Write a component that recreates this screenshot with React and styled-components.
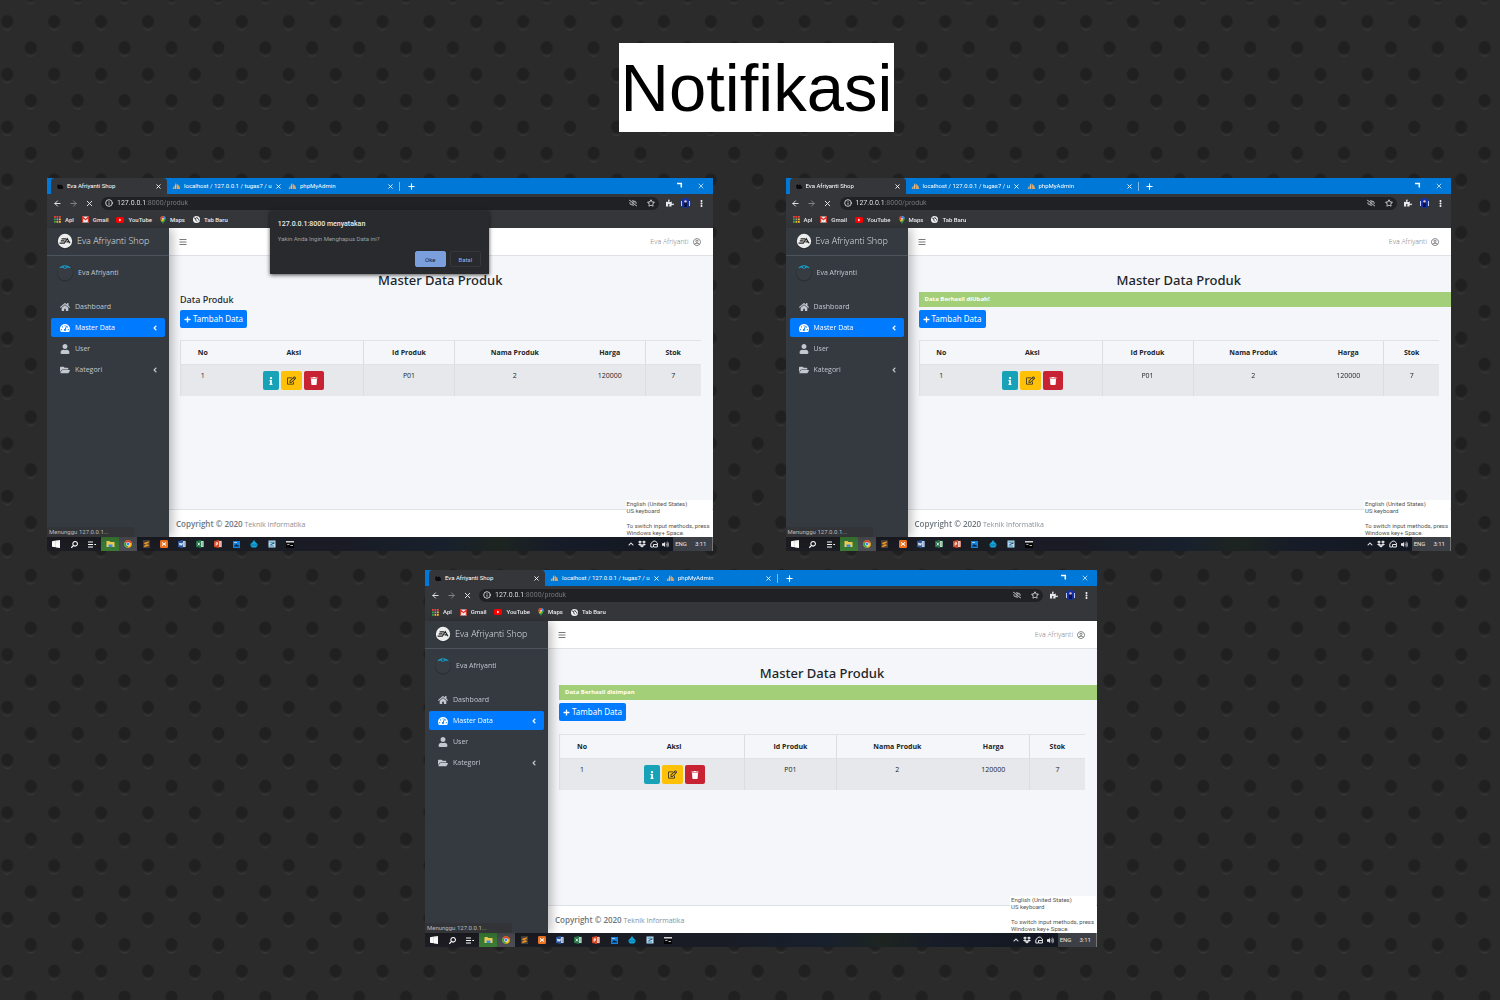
import React from "react";
import styled, { createGlobalStyle } from "styled-components";
import {
  FaHome, FaUser, FaFolderOpen, FaTachometerAlt, FaAngleLeft, FaPlus, FaInfo, FaRegEdit,
  FaTrash, FaBars, FaRegUserCircle, FaPuzzlePiece, FaRegStar, FaRegEyeSlash, FaEllipsisV,
  FaSearch, FaChevronUp, FaDropbox, FaVolumeUp,
} from "react-icons/fa";
import { ArrowLeft, ArrowRight, X, Plus, Info } from "lucide-react";

const ui = `"Open Sans", "Noto Sans", sans-serif`;
const chrome = `Roboto, "Open Sans", sans-serif`;

const GlobalStyle = createGlobalStyle`
  *, *::before, *::after { box-sizing: border-box; }
  body { margin: 0; background: #2a2a2a; font-family: ${ui}; }
  button, input { font: inherit; color: inherit; margin: 0; padding: 0; border: 0; background: none; }
  a { color: inherit; text-decoration: none; }
  svg { display: block; flex: none; }
`;

/* ---------- slide ---------- */

const Backdrop = styled.svg`
  position: fixed;
  inset: 0;
  z-index: -1;
  width: 100%;
  height: 100%;
`;

const Slide = styled.main`
  display: flex;
  flex-direction: column;
  min-height: 100vh;
  padding: 43px 49px 53px 47px;
`;

const TitleRow = styled.header`
  display: flex;
  justify-content: center;
  padding-left: 15px;
  margin-bottom: 46px;
`;

const SlideTitle = styled.h1`
  margin: 0;
  padding: 0 2px;
  background: #fff;
  color: #000;
  font: 400 67px/89px "Liberation Sans", Arial, sans-serif;
`;

const TopShots = styled.div`
  display: grid;
  grid-template-columns: 1fr 1fr;
  gap: 73px;
  margin-bottom: 19px;
`;

const BottomShots = styled.div`
  display: flex;
  justify-content: center;
  padding-left: 24px;
`;

/* ---------- browser window ---------- */

const Window = styled.section`
  position: relative;
  display: flex;
  flex-direction: column;
  width: 100%;
  max-width: ${(p) => (p.$large ? "672px" : "none")};
  min-height: ${(p) => (p.$large ? "377px" : "373px")};
  background: #35363a;
  overflow: hidden;
`;

const TabBar = styled.div`
  display: flex;
  align-items: center;
  height: 16px;
  padding-left: 4px;
  background: #0078d7;
  color: #fff;
  font: 400 6px/8px ${chrome};
`;

const Tab = styled.div`
  display: flex;
  align-items: center;
  gap: 3px;
  width: 116px;
  height: 16px;
  padding: 0 5px;
  border-radius: 4px 4px 0 0;
  background: ${(p) => (p.$active ? "#35363a" : "transparent")};
`;

const TabName = styled.button`
  flex: 1;
  white-space: nowrap;
  text-align: left;
`;

const IconButton = styled.button`
  display: flex;
  align-items: center;
  justify-content: center;
  width: ${(p) => p.$w || 16}px;
  height: 12px;
  color: ${(p) => p.$color || "inherit"};
`;

const NewTab = styled.div`
  display: flex;
  border-left: 1px solid #7db9ec;
  height: 9px;
  align-items: center;
  padding-left: 3px;
`;

const WindowControls = styled.div`
  display: flex;
  margin-left: auto;
  gap: 6px;
  padding-right: 4px;
`;

const Toolbar = styled.div`
  display: flex;
  align-items: center;
  height: 18px;
  padding: 0 3px 0 2px;
  color: #e8eaed;
`;

const Omnibox = styled.label`
  display: flex;
  flex: 1;
  align-items: center;
  gap: 4px;
  height: 13px;
  margin: 0 3px 0 4px;
  padding: 0 0 0 4px;
  border-radius: 7px;
  background: #202124;
`;

const Address = styled.input`
  flex: 1;
  min-width: 0;
  font: 400 7px/9px ${chrome};
  background: linear-gradient(90deg, #f1f3f4 29px, #777a7e 29px);
  background-clip: text;
  -webkit-text-fill-color: transparent;
`;

const Bookmarks = styled.nav`
  display: flex;
  align-items: center;
  gap: 8px;
  height: ${(p) => (p.$large ? 17 : 16)}px;
  padding: 0 0 1px 7px;
  color: #e8eaed;
  font: 500 6px/8px ${chrome};
`;

const Bookmark = styled.a`
  display: flex;
  align-items: center;
  gap: 4px;
`;

const Viewport = styled.div`
  display: flex;
  flex: 1;
  position: relative;
`;

/* ---------- admin page ---------- */

const Sidebar = styled.aside`
  position: relative;
  flex: none;
  width: ${(p) => (p.$large ? 123 : 122)}px;
  background: #343a40;
  color: #c2c7d0;
  box-shadow: 3px 0 10px rgba(0, 0, 0, 0.28);
`;

const Brand = styled.a`
  display: flex;
  align-items: center;
  gap: 4px;
  height: 28px;
  padding: 0 10px 1px;
  border-bottom: 1px solid #4b545c;
  font: 300 9px/12px ${ui};
  color: #e0e3e6;
  white-space: nowrap;
`;

const UserPanel = styled.a`
  display: flex;
  align-items: center;
  gap: 5px;
  height: 34px;
  padding-left: 10px;
  font: 400 7px/10px ${ui};
`;

const Menu = styled.nav`
  display: flex;
  flex-direction: column;
  gap: 2px;
  padding: 7px 4px 0;
`;

const MenuItem = styled.a`
  display: flex;
  align-items: center;
  gap: 5px;
  height: 19px;
  padding: 0 6px 0 9px;
  border-radius: 2px;
  font: 400 7px/10px ${ui};
  background: ${(p) => (p.$active ? "#007bff" : "transparent")};
  color: ${(p) => (p.$active ? "#fff" : "inherit")};
  & > span { flex: 1; }
`;

const Main = styled.div`
  display: flex;
  flex: 1;
  flex-direction: column;
  min-width: 0;
  background: #f4f6f9;
  color: #212529;
`;

const Navbar = styled.header`
  display: flex;
  align-items: center;
  justify-content: space-between;
  height: 28px;
  padding: 0 12px 0 6px;
  border-bottom: 1px solid #dee2e6;
  background: #fff;
  color: #77797c;
  font: 300 7px/10px ${ui};
`;

const Account = styled.a`
  display: flex;
  align-items: center;
  gap: 4px;
`;

const Content = styled.div`
  flex: 1;
  padding: 15px 0 0 11px;
`;

const PageTitle = styled.h2`
  margin: 0 12px 3px 0;
  font: 500 13px/18px "Noto Sans", ${ui};
  text-align: center;
`;

const Subtitle = styled.h3`
  margin: 0 0 3px;
  font: 500 9px/15px "Noto Sans", ${ui};
`;

const Alert = styled.div`
  margin: 0 0 3px;
  padding: 0 6px;
  background: #a3cf78;
  color: #fff;
  font: 700 6px/15px ${ui};
`;

const AddButton = styled.button`
  display: flex;
  align-items: center;
  justify-content: center;
  gap: 2px;
  width: 67px;
  height: 18px;
  margin-bottom: ${(p) => (p.$large ? 13 : 12)}px;
  border-radius: 2px;
  background: #007bff;
  color: #fff;
  font: 400 8px/12px "Noto Sans", ${ui};
  white-space: nowrap;
`;

const TableWrap = styled.div`
  padding-right: 12px;
`;

const Table = styled.table`
  width: 100%;
  table-layout: fixed;
  border-collapse: collapse;
  border-left: 1px solid #dfe2e6;
  text-align: center;
  font: 400 7px/10px ${ui};
  th, td {
    padding: 6px 0 0;
    vertical-align: top;
    border-top: 1px solid #dfe2e6;
  }
  th { height: 24px; padding-top: 7px; font-weight: 700; }
  td { height: 31px; background: #e6e8eb; }
  th:nth-child(n + 3):not(:nth-child(5)),
  td:nth-child(n + 3):not(:nth-child(5)) { border-left: 1px solid #dadde2; }
`;

const Col = styled.col`
  width: ${(p) => p.$w}%;
`;

const Actions = styled.div`
  display: flex;
  justify-content: center;
  gap: 2px;
`;

const Action = styled.button`
  display: flex;
  align-items: center;
  justify-content: center;
  width: ${(p) => p.$w}px;
  height: 19px;
  border-radius: 2px;
  background: ${(p) => p.$bg};
  color: ${(p) => p.$fg || "#fff"};
`;

const Footer = styled.footer`
  height: 28px;
  padding-left: 7px;
  border-top: 1px solid #dee2e6;
  background: #fff;
  color: #869099;
  font: 400 7px/28px ${ui};
  strong { font-size: 8px; font-weight: 600; color: #6c757d; }
`;

/* ---------- overlays ---------- */

const Status = styled.output`
  position: absolute;
  left: 0;
  bottom: 0;
  width: 87px;
  padding-left: 2px;
  background: #323438;
  color: #b8bbbf;
  font: 400 6px/10px ${chrome};
`;

const Language = styled.aside`
  position: absolute;
  right: 1px;
  bottom: 1px;
  width: 86px;
  padding: 0 1px;
  background: #fff;
  color: #555;
  font: 400 6px/7px ${chrome};
  white-space: nowrap;
  p { margin: 0 0 8px; }
  p:last-child { margin: 0; }
`;

const Dialog = styled.div`
  position: absolute;
  top: 33px;
  left: calc(50% - 110px);
  width: 219px;
  height: 63px;
  padding: 9px 8px 7px;
  display: flex;
  flex-direction: column;
  background: #292a2d;
  box-shadow: 0 1px 4px rgba(0, 0, 0, 0.7);
  font: 400 6px/9px ${chrome};
  color: #9aa0a6;
`;

const DialogTitle = styled.h3`
  margin: 0 0 5px;
  font: 500 7px/9px ${chrome};
  color: #e8eaed;
`;

const DialogText = styled.p`
  margin: 0;
`;

const DialogButtons = styled.div`
  display: flex;
  justify-content: flex-end;
  gap: 4px;
  margin-top: auto;
`;

const DialogButton = styled.button`
  width: 31px;
  height: 16px;
  border: 1px solid ${(p) => (p.$primary ? "#7b9fdc" : "#35373b")};
  border-radius: 2px;
  background: ${(p) => (p.$primary ? "#7b9fdc" : "transparent")};
  color: ${(p) => (p.$primary ? "#202124" : "#8ab4f8")};
`;

/* ---------- taskbar ---------- */

const Taskbar = styled.div`
  display: flex;
  align-items: center;
  height: 14px;
  background: linear-gradient(90deg, #1c1c22, #191c25 45%, #18202d 60%, #1d2420 68%, #171c28 76%, #10151f);
  color: #fff;
`;

const TaskButton = styled.button`
  display: flex;
  align-items: center;
  justify-content: center;
  width: 18px;
  height: 14px;
  background: ${(p) => p.$bg || "transparent"};
`;

const Tray = styled.div`
  display: flex;
  align-items: center;
  margin-left: auto;
  gap: 4px;
  font: 400 6px/14px ${chrome};
  color: #e6e6e6;
`;

const Locale = styled.div`
  display: flex;
  gap: 8px;
  padding: 0 5px 0 2px;
  border-right: 1px solid #777;
  background: #3c4046;
`;

/* ---------- drawings ---------- */

const Fish = () => (
  <svg width="8" height="8" viewBox="0 0 8 8">
    <path d="M1 4.500 L2.500 1 L4 2.500 L6 3 L7.500 6 L6 7 H2Z" fill="#0c0c0e" />
    <path d="M2.400 1.600l1 1" stroke="#aaa" strokeWidth=".6" />
  </svg>
);

const PhpMyAdmin = () => (
  <svg width="9" height="8" viewBox="0 0 9 8">
    <path d="M3 7 Q2.600 2.400 4 1 Q4.500 5 3.800 7Z" fill="#d8c3a0" />
    <path d="M4.600 7 V1.600 Q7.500 3 8.200 7Z" fill="#d9a468" />
    <path d="M.6 7 Q.8 4.600 2.600 3.400 V7Z" fill="#b5a58c" />
  </svg>
);

const AppsGrid = () => (
  <svg width="7" height="7" viewBox="0 0 7 7">
    {["#e8453c", "#e8453c", "#e8453c", "#34a853", "#9aa0a6", "#f9bb2d", "#34a853", "#f9bb2d", "#f9bb2d"].map((c, i) => (
      <rect key={i} x={(i % 3) * 2.5} y={Math.floor(i / 3) * 2.5} width="1.8" height="1.8" fill={c} />
    ))}
  </svg>
);

const GmailIcon = () => (
  <svg width="7" height="7" viewBox="0 0 7 7">
    <rect y=".5" width="7" height="6" rx=".6" fill="#f4f4f4" />
    <path d="M.6 6.500V1l2.900 2.600L6.400 1v5.500" fill="none" stroke="#e0352b" strokeWidth="1.200" />
  </svg>
);

const YouTubeIcon = () => (
  <svg width="8" height="6" viewBox="0 0 8 6">
    <rect width="8" height="6" rx="1.600" fill="#f00" />
    <path d="M3.100 1.600L5.400 3L3.100 4.400Z" fill="#fff" />
  </svg>
);

const MapsIcon = () => (
  <svg width="6" height="8" viewBox="0 0 6 8">
    <path d="M3 8C2.500 6 .3 5 .3 2.800A2.700 2.700 0 0 1 5.700 2.800C5.700 5 3.500 6 3 8Z" fill="#34a853" />
    <path d="M.3 2.800A2.700 2.700 0 0 1 3 .1V2.800L.9 4.700Z" fill="#ea4335" />
    <path d="M3 .1A2.700 2.700 0 0 1 5.700 2.800L3 2.800Z" fill="#4285f4" />
    <path d="M.9 4.700L3 2.800L4 4L1.800 5.800Z" fill="#fbbc04" />
    <circle cx="3" cy="2.800" r=".8" fill="#fff" />
  </svg>
);

const GlobeIcon = () => (
  <svg width="7" height="7" viewBox="0 0 7 7">
    <circle cx="3.500" cy="3.500" r="3.500" fill="#f1f3f4" />
    <path d="M1 2L3 2.600L2.600 4L4 5.600M4 .8L3.800 2L5.600 3.200L6 4.600" fill="none" stroke="#35363a" strokeWidth=".9" />
  </svg>
);

const EaLogo = () => (
  <svg width="16" height="16" viewBox="0 0 16 16">
    <circle cx="8" cy="8.500" r="7.500" fill="#23272b" />
    <circle cx="8" cy="8" r="7.200" fill="#eceded" />
    <path d="M4.600 5.900H9M3.800 7.900H7.600M2.600 10.200H7.300L10.200 5.600L13 10.200M9.500 8.900H12" fill="none" stroke="#222" strokeWidth="1.200" />
  </svg>
);

const Avatar = () => (
  <svg width="16" height="18" viewBox="0 0 16 18">
    <circle cx="8" cy="9.500" r="8" fill="#2b3035" />
    <circle cx="8" cy="8.800" r="7.500" fill="#363c42" />
    <path d="M2 4.200A7.500 7.500 0 0 1 14 4.200L10.500 3.400L8 5L5.500 3.400Z" fill="#1b9cc9" />
    <path d="M6.500 2.600L8 4.300L9.500 2.600Z" fill="#22282d" />
  </svg>
);

const ProfilePicture = () => (
  <svg width="11" height="10" viewBox="0 0 11 10">
    <circle cx="5.500" cy="5" r="5" fill="#1230a8" />
    <path d="M1.500 3V8M9.500 3V8" stroke="#cfd8ff" strokeWidth=".9" />
    <path d="M4 9V4.500Q5.500 2 7 4.500V9Z" fill="#0a1440" />
    <circle cx="5.500" cy="3.400" r="1.200" fill="#e7c3c0" />
  </svg>
);

const RestoreIcon = () => (
  <svg width="8" height="8" viewBox="0 0 8 8">
    <path d="M2 1.500H6.300V5.500" fill="none" stroke="#fff" strokeWidth="1.500" />
  </svg>
);

const WindowsIcon = () => (
  <svg width="8" height="8" viewBox="0 0 8 8">
    <path d="M0 1.200L3.900 .6V3.900H0ZM4 .5L8 0V3.900H4ZM0 4H3.900V7.300L0 6.800ZM4 4H8V8L4 7.400Z" fill="#fff" />
  </svg>
);

const TaskViewIcon = () => (
  <svg width="8" height="7" viewBox="0 0 8 7">
    <path d="M0 1H5M0 3.500H5M0 6H5M6.300 3.500H8" stroke="#fff" strokeWidth="1.200" />
  </svg>
);

const SearchIcon = styled(FaSearch)`
  transform: scaleX(-1);
`;

const ExplorerIcon = () => (
  <svg width="9" height="8" viewBox="0 0 9 8">
    <path d="M.5 1H3.500L4.300 2H8.500V7H.5Z" fill="#f6cf57" />
    <path d="M2.500 7V4.500H6.500V7Z" fill="#3b8ee0" />
  </svg>
);

const ChromeIcon = () => (
  <svg width="8" height="8" viewBox="0 0 8 8">
    <circle cx="4" cy="4" r="3.800" fill="#fbc116" />
    <path d="M4 4L.7 2.100A3.800 3.800 0 0 1 7.400 2.300Z" fill="#ea4335" />
    <path d="M4 4L.7 2.100A3.800 3.800 0 0 0 3.800 7.800Z" fill="#34a853" />
    <circle cx="4" cy="4" r="1.900" fill="#fff" />
    <circle cx="4" cy="4" r="1.400" fill="#4285f4" />
  </svg>
);

const SublimeIcon = () => (
  <svg width="7" height="8" viewBox="0 0 7 8">
    <rect width="7" height="8" fill="#46423c" />
    <path d="M1.200 2.800L5.800 1.200V2.900L3 3.900L5.800 4.800V5.800L1.200 7.200V5.600L4 4.800L1.200 3.900Z" fill="#f89822" />
  </svg>
);

const XamppIcon = () => (
  <svg width="8" height="8" viewBox="0 0 8 8">
    <rect width="8" height="8" rx="1.200" fill="#f37623" />
    <path d="M2 2.200L4 4L2 5.800M6 2.200L4 4L6 5.800M2.300 4H5.700" fill="none" stroke="#fff" strokeWidth="1" />
  </svg>
);

const officeMarks = {
  word: ["#2b579a", "M1.300 2.800L2 5.400L2.900 3L3.800 5.400L4.500 2.800"],
  excel: ["#217346", "M1.700 2.600L4 5.500M4 2.600L1.700 5.500"],
  powerpoint: ["#d24726", "M2.100 5.700V2.700H3.500V4.300H2.100"],
};

const OfficeIcon = ({ app }) => (
  <svg width="8" height="8" viewBox="0 0 8 8">
    <rect x="3.500" y="1" width="4.300" height="6" fill="#f2f4f7" stroke={officeMarks[app][0]} strokeWidth=".5" />
    <path d="M5.300 3H7M5.300 5H7" stroke={officeMarks[app][0]} strokeWidth=".8" />
    <path d="M0 1L5 0V8L0 7Z" fill={officeMarks[app][0]} />
    <path d={officeMarks[app][1]} fill="none" stroke="#fff" strokeWidth=".8" />
  </svg>
);

const PhotosIcon = () => (
  <svg width="7" height="7" viewBox="0 0 7 7">
    <rect width="7" height="7" fill="#1583e0" />
    <path d="M.8 5.500L3 3L4.300 4.300L5 3.700L6.300 5.500Z" fill="#06223f" />
    <path d="M1 1.500H4" stroke="#bfe0ff" strokeWidth=".8" />
  </svg>
);

const DropIcon = () => (
  <svg width="8" height="8" viewBox="0 0 8 8">
    <path d="M4 0Q5 2 7.500 4Q8 6 6 7.500H2Q0 6 .5 4Q3 2 4 0Z" fill="#12a5d8" />
    <path d="M1 5H7" stroke="#0b6d9c" strokeWidth=".8" />
  </svg>
);

const NotesIcon = () => (
  <svg width="8" height="8" viewBox="0 0 8 8">
    <rect x=".5" y=".5" width="7" height="7" fill="#b9def2" />
    <path d="M1.500 2.200H6.500M1.500 6H6" stroke="#2a7fb5" strokeWidth=".9" />
    <path d="M2.500 4.600L6.500 3" stroke="#1a3d57" strokeWidth="1" />
  </svg>
);

const TerminalIcon = () => (
  <svg width="8" height="7" viewBox="0 0 8 7">
    <rect width="8" height="7" fill="#050505" />
    <path d="M0 .8H8" stroke="#e8e8e8" strokeWidth="1.400" />
    <path d="M1.200 3.400H3.500M4.500 4.500H7" stroke="#ccc" strokeWidth=".9" />
  </svg>
);

const NetworkIcon = () => (
  <svg width="8" height="8" viewBox="0 0 8 8">
    <path d="M.8 4Q4 -1.500 7.400 3V7H3.500V4.500H7M.8 4V7H3" fill="none" stroke="#e6e6e6" strokeWidth="1" />
  </svg>
);

const HoleDrawing = ({ x, y }) => (
  <>
    <ellipse cx={x} cy={y + 2.5} rx="5.500" ry="7" fill="#373737" />
    <ellipse cx={x} cy={y + 1} rx="7" ry="7" fill="#292929" />
    <ellipse cx={x} cy={y} rx="6" ry="6.300" fill="#202020" />
  </>
);

const PerforatedBackdrop = () => (
  <Backdrop aria-hidden="true">
    <defs>
      <pattern id="holes" x="-4.500" y="6.500" width="46.900" height="52.750" patternUnits="userSpaceOnUse">
        <rect width="47" height="53" fill="#2b2b2b" />
        <HoleDrawing x={11.8} y={14.8} />
        <HoleDrawing x={35.3} y={41} />
      </pattern>
    </defs>
    <rect width="100%" height="100%" fill="url(#holes)" />
  </Backdrop>
);

/* ---------- composition ---------- */

const bookmarks = [
  ["Apl", AppsGrid],
  ["Gmail", GmailIcon],
  ["YouTube", YouTubeIcon],
  ["Maps", MapsIcon],
  ["Tab Baru", GlobeIcon],
];

const menu = [
  { label: "Dashboard", Icon: FaHome },
  { label: "Master Data", Icon: FaTachometerAlt, active: true, more: true },
  { label: "User", Icon: FaUser },
  { label: "Kategori", Icon: FaFolderOpen, more: true },
];

const columns = [
  ["No", 8.5], ["Aksi", 26.7], ["Id Produk", 17.5], ["Nama Produk", 23.1], ["Harga", 13.6], ["Stok", 10.6],
];

const tasks = [
  ["Start", <WindowsIcon />],
  ["Search", <SearchIcon size={7} />],
  ["Task View", <TaskViewIcon />],
  ["File Explorer", <ExplorerIcon />, "#3a7a35"],
  ["Chrome", <ChromeIcon />, "#4c4d52"],
  ["Sublime Text", <SublimeIcon />],
  ["XAMPP", <XamppIcon />],
  ["Word", <OfficeIcon app="word" />],
  ["Excel", <OfficeIcon app="excel" />],
  ["PowerPoint", <OfficeIcon app="powerpoint" />],
  ["Photos", <PhotosIcon />],
  ["Paint", <DropIcon />],
  ["Notes", <NotesIcon />],
  ["Terminal", <TerminalIcon />],
];

const BrowserTab = ({ icon, children, active }) => (
  <Tab $active={active}>
    {icon}
    <TabName>{children}</TabName>
    <IconButton $w={7} aria-label="Tutup tab"><X size={7} strokeWidth={3} /></IconButton>
  </Tab>
);

const BrowserChrome = ({ large }) => (
  <>
    <TabBar>
      <BrowserTab icon={<Fish />} active>Eva Afriyanti Shop</BrowserTab>
      <BrowserTab icon={<PhpMyAdmin />}>localhost / 127.0.0.1 / tugas7 / u</BrowserTab>
      <BrowserTab icon={<PhpMyAdmin />}>phpMyAdmin</BrowserTab>
      <NewTab><IconButton aria-label="Tab baru"><Plus size={9} strokeWidth={3} /></IconButton></NewTab>
      <WindowControls>
        <IconButton aria-label="Pulihkan"><RestoreIcon /></IconButton>
        <IconButton aria-label="Tutup"><X size={8} strokeWidth={2} /></IconButton>
      </WindowControls>
    </TabBar>
    <Toolbar>
      <IconButton aria-label="Kembali"><ArrowLeft size={9} strokeWidth={2.5} /></IconButton>
      <IconButton aria-label="Maju" $color="#85888c"><ArrowRight size={9} strokeWidth={2.5} /></IconButton>
      <IconButton aria-label="Berhenti"><X size={9} strokeWidth={2.5} /></IconButton>
      <Omnibox>
        <Info size={8} strokeWidth={2.5} />
        <Address aria-label="Alamat" defaultValue="127.0.0.1:8000/produk" />
        <IconButton aria-label="Pelacakan" $w={12}><FaRegEyeSlash size={8} /></IconButton>
        <IconButton aria-label="Markah"><FaRegStar size={8} /></IconButton>
      </Omnibox>
      <IconButton aria-label="Ekstensi"><FaPuzzlePiece size={8} /></IconButton>
      <IconButton aria-label="Profil"><ProfilePicture /></IconButton>
      <IconButton aria-label="Menu"><FaEllipsisV size={7} /></IconButton>
    </Toolbar>
    <Bookmarks $large={large}>
      {bookmarks.map(([label, Icon]) => (
        <Bookmark href="#" key={label}><Icon />{label}</Bookmark>
      ))}
    </Bookmarks>
  </>
);

const ProductTable = () => (
  <TableWrap>
    <Table>
      <colgroup>{columns.map(([name, w]) => <Col key={name} $w={w} />)}</colgroup>
      <thead>
        <tr>{columns.map(([name]) => <th key={name} scope="col">{name}</th>)}</tr>
      </thead>
      <tbody>
        <tr>
          <td>1</td>
          <td>
            <Actions>
              <Action aria-label="Detail" $w={16} $bg="#17a2b8"><FaInfo size={8} /></Action>
              <Action aria-label="Ubah" $w={21} $bg="#ffc107" $fg="#212529"><FaRegEdit size={9} /></Action>
              <Action aria-label="Hapus" $w={20} $bg="#c82333"><FaTrash size={8} /></Action>
            </Actions>
          </td>
          <td>P01</td>
          <td>2</td>
          <td>120000</td>
          <td>7</td>
        </tr>
      </tbody>
    </Table>
  </TableWrap>
);

const DeleteDialog = () => (
  <Dialog role="dialog" aria-label="Konfirmasi">
    <DialogTitle>127.0.0.1:8000 menyatakan</DialogTitle>
    <DialogText>Yakin Anda Ingin Menghapus Data ini?</DialogText>
    <DialogButtons>
      <DialogButton $primary>Oke</DialogButton>
      <DialogButton>Batal</DialogButton>
    </DialogButtons>
  </Dialog>
);

const Shot = ({ large, alert, dialog }) => (
  <Window $large={large}>
    <BrowserChrome large={large} />
    <Viewport>
      <Sidebar $large={large}>
        <Brand href="#"><EaLogo />Eva Afriyanti Shop</Brand>
        <UserPanel href="#"><Avatar />Eva Afriyanti</UserPanel>
        <Menu>
          {menu.map(({ label, Icon, active, more }) => (
            <MenuItem href="#" key={label} $active={active}>
              <Icon size={10} />
              <span>{label}</span>
              {more && <FaAngleLeft size={8} />}
            </MenuItem>
          ))}
        </Menu>
        <Status>Menunggu 127.0.0.1...</Status>
      </Sidebar>
      <Main>
        <Navbar>
          <IconButton aria-label="Menu samping"><FaBars size={8} /></IconButton>
          <Account href="#">Eva Afriyanti<FaRegUserCircle size={8} /></Account>
        </Navbar>
        <Content>
          <PageTitle>Master Data Produk</PageTitle>
          {alert ? <Alert role="status">{alert}</Alert> : <Subtitle>Data Produk</Subtitle>}
          <AddButton $large={large}><FaPlus size={7} />Tambah Data</AddButton>
          <ProductTable />
        </Content>
        <Footer><strong>Copyright © 2020</strong> Teknik Informatika</Footer>
      </Main>
      <Language>
        <p>English (United States)<br />US keyboard</p>
        <p>To switch input methods, press<br />Windows key+ Space.</p>
      </Language>
    </Viewport>
    <Taskbar>
      {tasks.map(([label, icon, bg]) => (
        <TaskButton key={label} aria-label={label} $bg={bg}>{icon}</TaskButton>
      ))}
      <Tray>
        <FaChevronUp size={6} />
        <FaDropbox size={8} />
        <NetworkIcon />
        <FaVolumeUp size={7} />
        <Locale><span>ENG</span><span>3:11</span></Locale>
      </Tray>
    </Taskbar>
    {dialog && <DeleteDialog />}
  </Window>
);

export default function App() {
  return (
    <>
      <GlobalStyle />
      <PerforatedBackdrop />
      <Slide>
        <TitleRow><SlideTitle>Notifikasi</SlideTitle></TitleRow>
        <TopShots>
          <Shot dialog />
          <Shot alert="Data Berhasil diUbah!" />
        </TopShots>
        <BottomShots>
          <Shot large alert="Data Berhasil disimpan" />
        </BottomShots>
      </Slide>
    </>
  );
}
